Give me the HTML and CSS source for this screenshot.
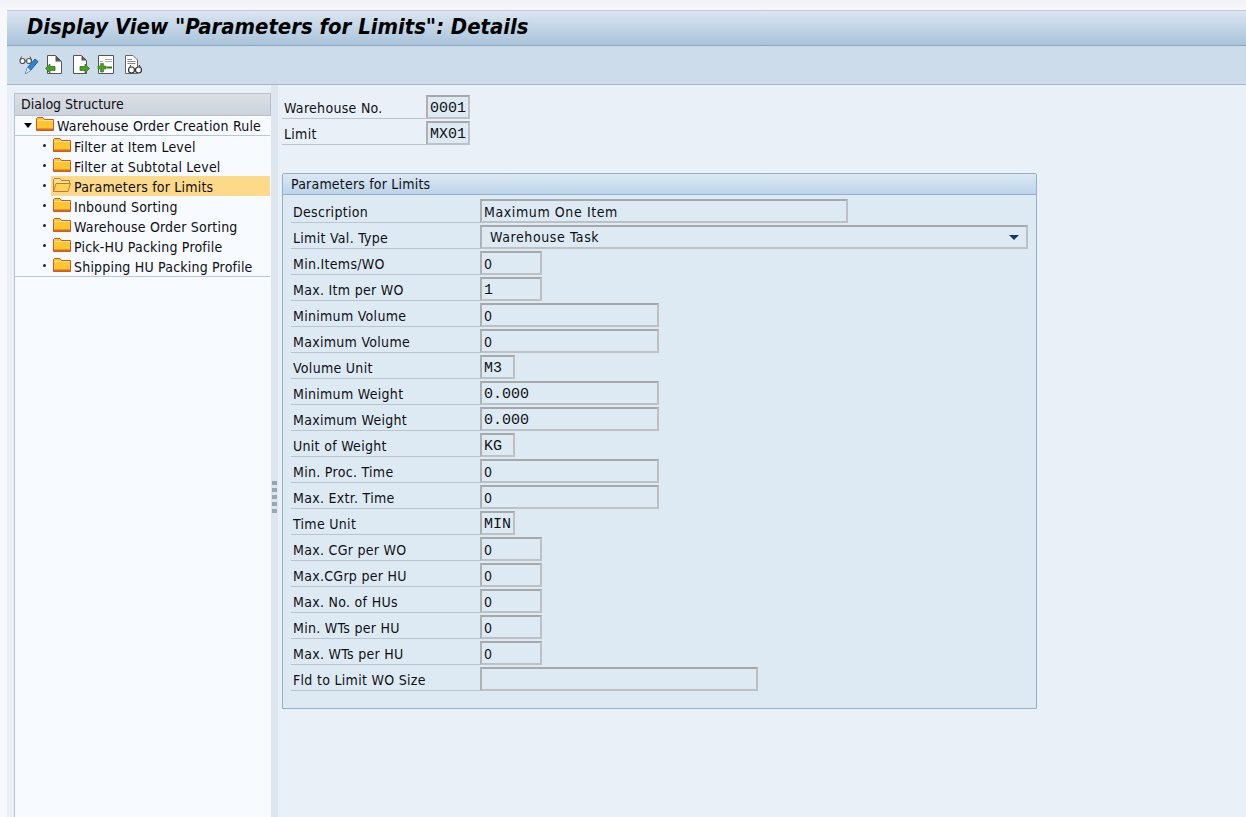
FILE: index.html
```html
<!DOCTYPE html>
<html lang="en">
<head>
<meta charset="utf-8">
<title>Display View "Parameters for Limits": Details</title>
<link rel="stylesheet" href="styles.css">
</head>
<body>
<svg class="defs" width="0" height="0" aria-hidden="true">
  <symbol id="folder" viewBox="0 0 18 14">
    <path d="M0.5 13.5V1.5L1.5 0.5H7L8.5 2.5H17.5V13.5Z" fill="#fdc72f" stroke="#c8572a"/>
    <path d="M1 3.5H17" stroke="#ffe38a"/>
    <path d="M1 12.5H17" stroke="#d9661f" stroke-width="2"/>
  </symbol>
  <symbol id="folder-open" viewBox="0 0 18 14">
    <path d="M0.5 13.5V1.5L1.5 0.5H7L8.5 2.5H16.5V5" fill="#fde28a" stroke="#c8772a"/>
    <path d="M0.5 13.5L3 5.5H17.5L15 13.5Z" fill="#fdd25c" stroke="#c8772a"/>
  </symbol>
</svg>
<div class="app">
  <header class="title">Display View "Parameters for Limits": Details</header>
  <div class="toolbar">
    <svg class="tool" width="20" height="22" viewBox="0 0 20 22">
      <circle cx="3.500" cy="7" r="2.500" fill="#fff" stroke="#555" stroke-width="1.200"/>
      <circle cx="10" cy="7" r="2.500" fill="#fff" stroke="#555" stroke-width="1.200"/>
      <path d="M6 7H7.500M1 6L2.500 2.500M12.500 6L11 2.500" stroke="#555" fill="none"/>
      <path d="M6.500 19.500L8.500 13.500L16 5L19 7.500L11.500 16.500Z" fill="#2f86cc" stroke="#1d5f9e"/>
      <path d="M6.500 19.500L8.500 13.500L11.500 16.500Z" fill="#d8e6f2"/>
    </svg>
    <svg class="tool" width="18" height="22" viewBox="0 0 18 22">
      <path d="M2.500 1.500H10.500L16.500 7.500V19.500H2.500Z" fill="#fff" stroke="#555"/>
      <path d="M10.500 1.500V7.500H16.500Z" fill="#555"/>
      <path d="M0.500 14.500L5 10V12.500H10V16.500H5V19Z" fill="#4f9a2a" stroke="#2f7a1a" stroke-width="0.800"/>
    </svg>
    <svg class="tool tool-gap" width="18" height="22" viewBox="0 0 18 22">
      <path d="M0.500 1.500H8.500L13.500 6.500V19.500H0.500Z" fill="#fff" stroke="#555"/>
      <path d="M8.500 1.500V6.500H13.500Z" fill="#555"/>
      <path d="M16.500 14.500L12 10V12.500H7V16.500H12V19Z" fill="#4f9a2a" stroke="#2f7a1a" stroke-width="0.800"/>
    </svg>
    <svg class="tool" width="18" height="22" viewBox="0 0 18 22">
      <path d="M1.500 1.500H16.500V19.500H1.500Z" fill="#fff" stroke="#555"/>
      <path d="M8 5.500H15M8 7.500H15M3 7.500H6" stroke="#aaa"/>
      <path d="M9.500 13.500H15" stroke="#2f7a1a" stroke-width="2"/>
      <path d="M3.500 9.500H6.500V12H9V15H6.500V18H3.500V15H1V12H3.500Z" fill="#4f9a2a" stroke="#2f7a1a" stroke-width="0.600"/>
    </svg>
    <svg class="tool tool-gap" width="18" height="22" viewBox="0 0 18 22">
      <path d="M0.500 1.500H8L12.500 6V19.500H0.500Z" fill="#fff" stroke="#666"/>
      <path d="M2.500 5.500H7M2.500 7.500H10.500M2.500 9.500H10.500" stroke="#888"/>
      <circle cx="6.500" cy="16" r="3" fill="#fff" stroke="#333" stroke-width="1.200"/>
      <circle cx="13.500" cy="16" r="3" fill="#fff" stroke="#333" stroke-width="1.200"/>
      <path d="M9.500 15.500H10.500M4.500 13.500L6 11M15.500 13.500L14 11" stroke="#333" fill="none"/>
    </svg>
  </div>
  <div class="workspace">
    <aside class="side">
      <div class="side-head">Dialog Structure</div>
      <div class="tree">
        <div class="node root">
          <span class="caret"></span>
          <svg class="fld" width="18" height="14"><use href="#folder"/></svg>
          <span>Warehouse Order Creation Rule</span>
        </div>
        <div class="children">
          <div class="node"><i class="dot"></i><svg class="fld" width="18" height="14"><use href="#folder"/></svg><span>Filter at Item Level</span></div>
          <div class="node"><i class="dot"></i><svg class="fld" width="18" height="14"><use href="#folder"/></svg><span>Filter at Subtotal Level</span></div>
          <div class="node selected"><i class="dot"></i><svg class="fld" width="18" height="14"><use href="#folder-open"/></svg><span>Parameters for Limits</span></div>
          <div class="node"><i class="dot"></i><svg class="fld" width="18" height="14"><use href="#folder"/></svg><span>Inbound Sorting</span></div>
          <div class="node"><i class="dot"></i><svg class="fld" width="18" height="14"><use href="#folder"/></svg><span>Warehouse Order Sorting</span></div>
          <div class="node"><i class="dot"></i><svg class="fld" width="18" height="14"><use href="#folder"/></svg><span>Pick-HU Packing Profile</span></div>
          <div class="node"><i class="dot"></i><svg class="fld" width="18" height="14"><use href="#folder"/></svg><span>Shipping HU Packing Profile</span></div>
        </div>
      </div>
    </aside>
    <div class="sash"><i></i><i></i><i></i><i></i><i></i></div>
    <main class="content">
      <div class="keys">
        <div class="row"><label class="lbl key-lbl">Warehouse No.</label><div class="fd w44 mono">0001</div></div>
        <div class="row"><label class="lbl key-lbl">Limit</label><div class="fd w44 mono">MX01</div></div>
      </div>
      <section class="group">
        <h2 class="group-head">Parameters for Limits</h2>
        <div class="group-body">
          <div class="row"><label class="lbl">Description</label><div class="fd w368">Maximum One Item</div></div>
          <div class="row"><label class="lbl">Limit Val. Type</label><div class="fd w548 select">Warehouse Task<span class="arrow"></span></div></div>
          <div class="row"><label class="lbl">Min.Items/WO</label><div class="fd w62">0</div></div>
          <div class="row"><label class="lbl">Max. Itm per WO</label><div class="fd w62 mono">1</div></div>
          <div class="row"><label class="lbl">Minimum Volume</label><div class="fd w179">0</div></div>
          <div class="row"><label class="lbl">Maximum Volume</label><div class="fd w179">0</div></div>
          <div class="row"><label class="lbl">Volume Unit</label><div class="fd w35 mono">M3</div></div>
          <div class="row"><label class="lbl">Minimum Weight</label><div class="fd w179 mono">0.000</div></div>
          <div class="row"><label class="lbl">Maximum Weight</label><div class="fd w179 mono">0.000</div></div>
          <div class="row"><label class="lbl">Unit of Weight</label><div class="fd w35 mono">KG</div></div>
          <div class="row"><label class="lbl">Min. Proc. Time</label><div class="fd w179">0</div></div>
          <div class="row"><label class="lbl">Max. Extr. Time</label><div class="fd w179">0</div></div>
          <div class="row"><label class="lbl">Time Unit</label><div class="fd w35 mono">MIN</div></div>
          <div class="row"><label class="lbl">Max. CGr per WO</label><div class="fd w62">0</div></div>
          <div class="row"><label class="lbl">Max.CGrp per HU</label><div class="fd w62">0</div></div>
          <div class="row"><label class="lbl">Max. No. of HUs</label><div class="fd w62">0</div></div>
          <div class="row"><label class="lbl">Min. WTs per HU</label><div class="fd w62">0</div></div>
          <div class="row"><label class="lbl">Max. WTs per HU</label><div class="fd w62">0</div></div>
          <div class="row"><label class="lbl">Fld to Limit WO Size</label><div class="fd w278"></div></div>
        </div>
      </section>
    </main>
  </div>
</div>
</body>
</html>
```
FILE: styles.css
```css
* { box-sizing: border-box; }
html, body { height: 100%; }
body {
  margin: 0;
  padding: 10px 0 0 7px;
  overflow: hidden;
  background: linear-gradient(#eef1f5, #f6f8fb 10px);
  font-family: "DejaVu Sans", "Noto Sans", sans-serif;
  font-stretch: condensed;
  font-size: 14px;
  color: #0f0f14;
}
.defs { position: absolute; }
.app { height: 807px; display: flex; flex-direction: column; background: #e9f0f7; }
.title {
  height: 36px;
  padding-left: 20px;
  font-size: 21.9px;
  font-weight: 700;
  font-style: italic;
  line-height: 31px;
  color: #000;
  background: linear-gradient(#dbe6f1, #a9c3da);
  border-top: 1px solid #b7cbdc;
  border-bottom: 1px solid #8ba7c0;
}
.toolbar {
  height: 39px;
  display: flex;
  align-items: center;
  padding-left: 12px;
  gap: 6px;
  background: #cddceb;
  border-bottom: 1px solid #a6b8c8;
}
.tool { display: block; flex: none; }
.tool-gap { margin-left: 4px; }
.workspace { flex: 1; min-height: 0; display: flex; padding-left: 7px; }
.side {
  width: 257px;
  margin-top: 8px;
  background: #f7fafe;
  border-left: 1px solid #b5c4d3;
}
.side-head {
  height: 23px;
  padding-left: 6px;
  line-height: 21px;
  background: linear-gradient(#dbe0e6, #ccd3db);
  border: 1px solid #b6c1cc;
  border-left: 0;
}
.node {
  height: 20px;
  display: flex;
  align-items: center;
  white-space: nowrap;
  letter-spacing: 0.2px;
}
.root {
  padding-left: 9px;
  border-bottom: 1px solid #b9c8d8;
  margin-right: 1px;
}
.caret {
  width: 0;
  height: 0;
  margin-right: 4px;
  border: 4px solid transparent;
  border-top: 5px solid #000;
  border-bottom: 0;
}
.root .fld { margin-right: 3px; }
.root .fld, .node .fld { flex: none; margin-top: -3px; }
.children { border-bottom: 1px solid #b9c8d8; margin-right: 1px; }
.children .node { padding-left: 27px; position: relative; }
.children .node span { padding-top: 2px; }
.children .fld { margin-left: 11px; margin-right: 3px; }
.dot {
  position: absolute;
  left: 28px;
  top: 8px;
  width: 3px;
  height: 3px;
  border-radius: 50%;
  background: #222;
}
.selected::before {
  content: "";
  position: absolute;
  left: 36px;
  right: 0;
  top: 0;
  bottom: 0;
  background: #fdd98a;
}
.selected > * { z-index: 1; position: relative; }
.selected > .dot { position: absolute; }
.sash {
  width: 7px;
  display: flex;
  flex-direction: column;
  align-items: center;
  gap: 3px;
  padding-top: 396px;
  background: #dde6ee;
}
.sash i { width: 5px; height: 4px; background: #98a6b2; }
.content { flex: 1; min-width: 0; padding: 10px 0 0 4px; }
.row { display: flex; height: 26px; }
.lbl {
  display: block;
  height: 24px;
  line-height: 27px;
  padding-left: 2px;
  letter-spacing: 0.3px;
  border-bottom: 1px solid #b9c4cf;
}
.key-lbl { width: 144px; }
.fd {
  height: 24px;
  padding-left: 2px;
  line-height: 22px;
  letter-spacing: 0.6px;
  border: 2px solid #bcc1c5;
  border-top-color: #a6a9ac;
  border-left-color: #aeb1b4;
  background: #deeaf3;
  white-space: pre;
}
.mono { font-family: "Liberation Mono", monospace; font-size: 15px; font-stretch: normal; letter-spacing: 0; line-height: 23px; }
.w35 { width: 35px; padding-left: 2px; }
.w44 { width: 44px; }
.w62 { width: 62px; }
.w179 { width: 179px; }
.w278 { width: 278px; }
.w368 { width: 368px; }
.w548 { width: 548px; }
.select { display: flex; justify-content: space-between; align-items: center; padding: 0 7px 0 8px; }
.arrow {
  width: 0;
  height: 0;
  border: 5px solid transparent;
  border-top: 5px solid #1b2f73;
  border-bottom: 0;
}
.keys { margin-bottom: 26px; }
.group {
  width: 755px;
  height: 536px;
  background: #deeaf3;
  border: 1px solid #8fb0cf;
  border-radius: 2px 2px 0 0;
}
.group-head {
  margin: 0;
  height: 21px;
  padding-left: 8px;
  font-size: 14px;
  font-weight: 400;
  line-height: 21px;
  letter-spacing: 0.2px;
  background: linear-gradient(#dce9f4, #bcd3e8);
  border-bottom: 1px solid #8fb0cf;
}
.group-body { padding: 4px 8px 0 8px; }
.group-body .lbl { width: 189px; padding-left: 2px; }
```
